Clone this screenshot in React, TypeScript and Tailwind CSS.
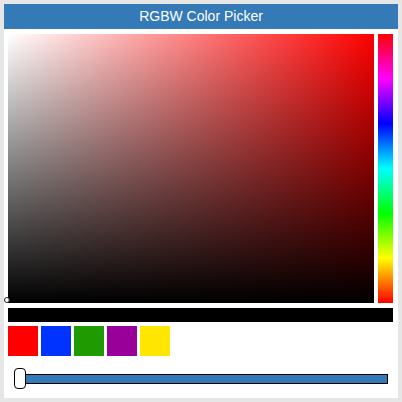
export default function App() {
  const swatches = ['#ff0000', '#0033ff', '#1f9a00', '#990099', '#ffe600'];

  return (
    <div className="w-[402px] h-[402px] bg-[#e6e6e6] p-1 font-['Liberation_Sans',Arial,sans-serif]">
      <div className="w-[394px] h-[394px] bg-white flex flex-col">
        {/* Header */}
        <div className="h-[25px] bg-[#337ab7] text-white text-[14px] flex items-center justify-center">
          RGBW Color Picker
        </div>

        <div className="px-1 pt-[5px] flex flex-col">
          {/* Saturation / value + hue */}
          <div className="flex gap-1">
            <div className="relative w-[366px] h-[269px] bg-[#ff0000]">
              <div className="absolute inset-0 bg-gradient-to-r from-white to-transparent" />
              <div className="absolute inset-0 bg-gradient-to-b from-transparent to-black" />
              <div className="absolute left-[-4px] bottom-0 w-[6px] h-[6px] rounded-full border border-[#222] bg-white/80" />
            </div>
            <div className="w-[15px] h-[269px] bg-[linear-gradient(to_bottom,#ff0000,#ff00ff,#0000ff,#00ffff,#00ff00,#ffff00,#ff0000)]" />
          </div>

          {/* Preview */}
          <div className="mt-[5px] w-[385px] h-[14px] bg-black" />

          {/* Swatches */}
          <div className="mt-1 flex gap-[3px]">
            {swatches.map((c) => (
              <div key={c} className="w-[30px] h-[30px]" style={{ backgroundColor: c }} />
            ))}
          </div>

          {/* White level slider */}
          <div className="relative mt-3 ml-[6px] w-[374px] h-[21px] flex items-center">
            <div className="w-full h-[10px] bg-[#337ab7] border border-black" />
            <div className="absolute left-0 top-0 w-[12px] h-[21px] bg-white border border-black rounded-[4px]" />
          </div>
        </div>
      </div>
    </div>
  );
}
